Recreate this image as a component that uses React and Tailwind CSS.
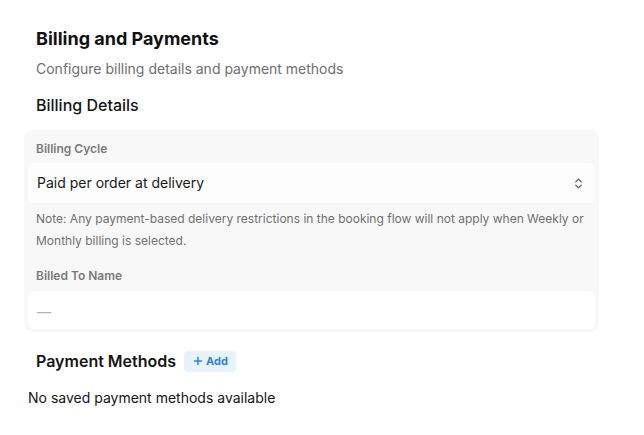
import React, { useState } from 'react';
import { ChevronsUpDown, Plus } from 'lucide-react';

function FieldLabel({ children, className = '' }) {
  return (
    <p className={`px-2 text-xs font-semibold leading-4 text-[#7a7a7a] ${className}`}>{children}</p>
  );
}

export default function App() {
  const [cycle] = useState('Paid per order at delivery');
  const [methods] = useState([]);

  return (
    <div className="min-h-screen bg-white font-['Inter',sans-serif] text-[#151515]">
      <div className="w-[575px] ml-6 pt-[25px]">
        <header className="px-3">
          <h1 className="text-lg font-bold leading-7 text-[#111]">Billing and Payments</h1>
          <p className="mt-1.5 text-sm leading-5 text-[#6e6e6e]">Configure billing details and payment methods</p>
          <h2 className="mt-[14px] text-base font-medium leading-6 text-[#151515]">Billing Details</h2>
        </header>

        {/* Billing details card */}
        <div className="mt-[13px] rounded-lg bg-[#f8f8f8] px-1 pt-[11px] pb-[3px]">
          <FieldLabel>Billing Cycle</FieldLabel>
          <button className="mt-1.5 flex h-10 w-full items-center justify-between rounded-md bg-[#fdfdfd] pl-[9px] pr-2.5 text-left">
            <span className="text-sm text-[#1a1a1a]">{cycle}</span>
            <ChevronsUpDown size={13} strokeWidth={2.25} className="text-[#555]" />
          </button>
          <p className="mt-[5px] px-2 text-xs leading-[22px] text-[#707070]">
            Note: Any payment-based delivery restrictions in the booking flow will not apply when Weekly or Monthly billing is selected.
          </p>
          <FieldLabel className="mt-4">Billed To Name</FieldLabel>
          <div className="mt-[7px] flex h-[38px] items-center rounded-md bg-white px-[9px] pt-1">
            <span className="text-sm text-[#b0b0b0]">—</span>
          </div>
        </div>

        {/* Payment methods */}
        <div className="mt-[17px] flex items-center gap-2 px-3">
          <h2 className="text-base font-semibold leading-6 text-[#151515]">Payment Methods</h2>
          <button className="flex h-[21px] items-center gap-0.5 rounded bg-[#e7f2fd] px-2 text-[11px] font-bold text-[#2f7fe0]">
            <Plus size={12} strokeWidth={3} />
            Add
          </button>
        </div>
        {methods.length === 0 && (
          <p className="mt-[15px] ml-1 text-sm leading-5 text-[#151515]">No saved payment methods available</p>
        )}
      </div>
    </div>
  );
}
